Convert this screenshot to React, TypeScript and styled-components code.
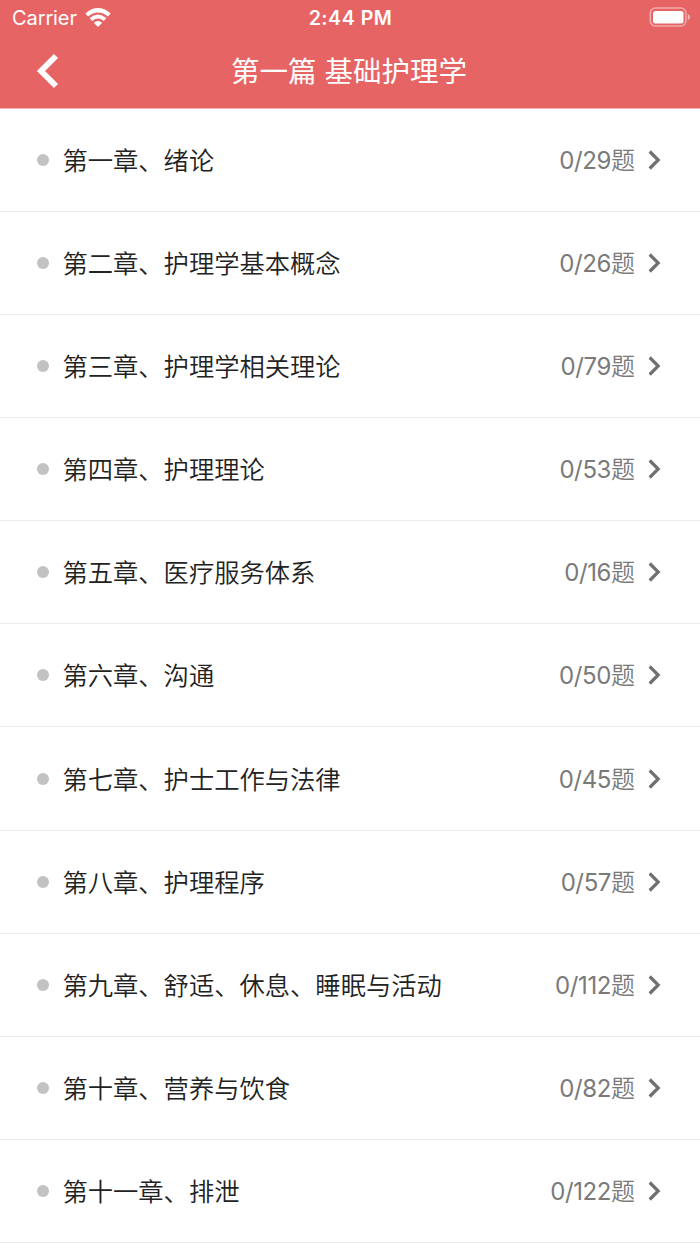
import React from 'react';
import styled, { createGlobalStyle } from 'styled-components';

const GlobalStyle = createGlobalStyle`
  * { box-sizing: border-box; }
  body { margin: 0; background: #fff; font-family: Inter, "Noto Sans CJK SC", sans-serif; }
`;

const Screen = styled.main`
  width: 700px;
  height: 1244px;
  overflow: hidden;
  background: #fff;
`;

const Header = styled.header`
  height: 109px;
  background: #e66464;
  border-bottom: 1px solid #f3b6b5;
  color: #fff;
`;

const StatusBar = styled.div`
  display: grid;
  grid-template-columns: 1fr auto 1fr;
  align-items: center;
  height: 36px;
  padding: 0 9px 0 12px;
  font-size: 20px;
`;

const Carrier = styled.div`
  display: flex;
  align-items: center;
  gap: 8px;
  margin-top: -1px;
  font-size: 20px;
  letter-spacing: -0.1px;
`;

const Clock = styled.div`
  transform: translateX(-1px);
  font-size: 19.6px;
  font-weight: 600;
  letter-spacing: 0.5px;
`;

const Battery = styled.svg`
  justify-self: end;
  margin-top: -2px;
`;

const NavBar = styled.div`
  display: grid;
  grid-template-columns: 100px 1fr 100px;
  align-items: center;
  height: 72px;
`;

const BackButton = styled.button`
  display: flex;
  align-items: center;
  height: 72px;
  padding: 0 0 2px 36px;
  border: 0;
  background: none;
`;

const Title = styled.h1`
  margin: 0 1px 0 -1px;
  text-align: center;
  font-size: 28.5px;
  font-weight: 400;
  line-height: 40px;
`;

const List = styled.ul`
  margin: 0;
  padding: 0;
  list-style: none;
`;

const Row = styled.li`
  display: flex;
  align-items: center;
  height: 103.08px;
  padding: 0 39px 0 37px;
  border-bottom: 1px solid #ededed;
`;

const Dot = styled.span`
  width: 12px;
  height: 12px;
  margin-right: 13.4px;
  border-radius: 50%;
  background: #c2c2c2;
`;

const Name = styled.span`
  flex: 1;
  padding-top: 2px;
  color: #222;
  font-size: 25.3px;
  font-weight: 350;
  line-height: 36px;
`;

const Count = styled.span`
  margin-right: 13px;
  padding-top: 2px;
  color: #7a7a7a;
  font-size: 24px;
  font-weight: 350;
  line-height: 36px;
`;

const Digits = styled.span`
  font-weight: 400;
  letter-spacing: -0.4px;
`;

const chapters: [string, number][] = [
  ['第一章、绪论', 29],
  ['第二章、护理学基本概念', 26],
  ['第三章、护理学相关理论', 79],
  ['第四章、护理理论', 53],
  ['第五章、医疗服务体系', 16],
  ['第六章、沟通', 50],
  ['第七章、护士工作与法律', 45],
  ['第八章、护理程序', 57],
  ['第九章、舒适、休息、睡眠与活动', 112],
  ['第十章、营养与饮食', 82],
  ['第十一章、排泄', 122],
];

export default function App() {
  return (
    <Screen>
      <GlobalStyle />
      <Header>
        <StatusBar>
          <Carrier>
            <span>Carrier</span>
            <svg width="26" height="20" viewBox="0 0 26 20" fill="#fff">
              <path d="M0.4 5.5Q13-5.3 25.6 5.5L23 8.5Q13 .4 3 8.5Z" />
              <path d="M4.6 10.1Q13 3.1 21.4 10.1L18.8 12.9Q13 8.3 7.2 12.9Z" />
              <path d="M8.8 14.8Q13 11 17.2 14.8L13 19Z" />
            </svg>
          </Carrier>
          <Clock>2:44 PM</Clock>
          <Battery width="42" height="20" viewBox="0 0 42 20">
            <rect x="1.3" y="1" width="35.6" height="18" rx="5" fill="none" stroke="#fff" strokeOpacity=".45" strokeWidth="1.6" />
            <rect x="4" y="4" width="30.5" height="12.5" rx="2.5" fill="#fff" />
            <path d="M38.8 7Q41 8 41 10T38.8 13Z" fill="#fff" fillOpacity=".55" />
          </Battery>
        </StatusBar>
        <NavBar>
          <BackButton aria-label="返回">
            <svg width="24" height="36" viewBox="0 0 24 36">
              <path d="M20 3L5 18L20 33" fill="none" stroke="#fff" strokeWidth="5.8" />
            </svg>
          </BackButton>
          <Title>第一篇 基础护理学</Title>
        </NavBar>
      </Header>
      <List>
        {chapters.map(([name, total]) => (
          <Row key={name}>
            <Dot />
            <Name>{name}</Name>
            <Count><Digits>0/{total}</Digits>题</Count>
            <svg width="13" height="20" viewBox="0 0 13 20">
              <path d="M1.7 1.5L10.2 10L1.7 18.5" fill="none" stroke="#707070" strokeWidth="3.2" />
            </svg>
          </Row>
        ))}
      </List>
    </Screen>
  );
}
